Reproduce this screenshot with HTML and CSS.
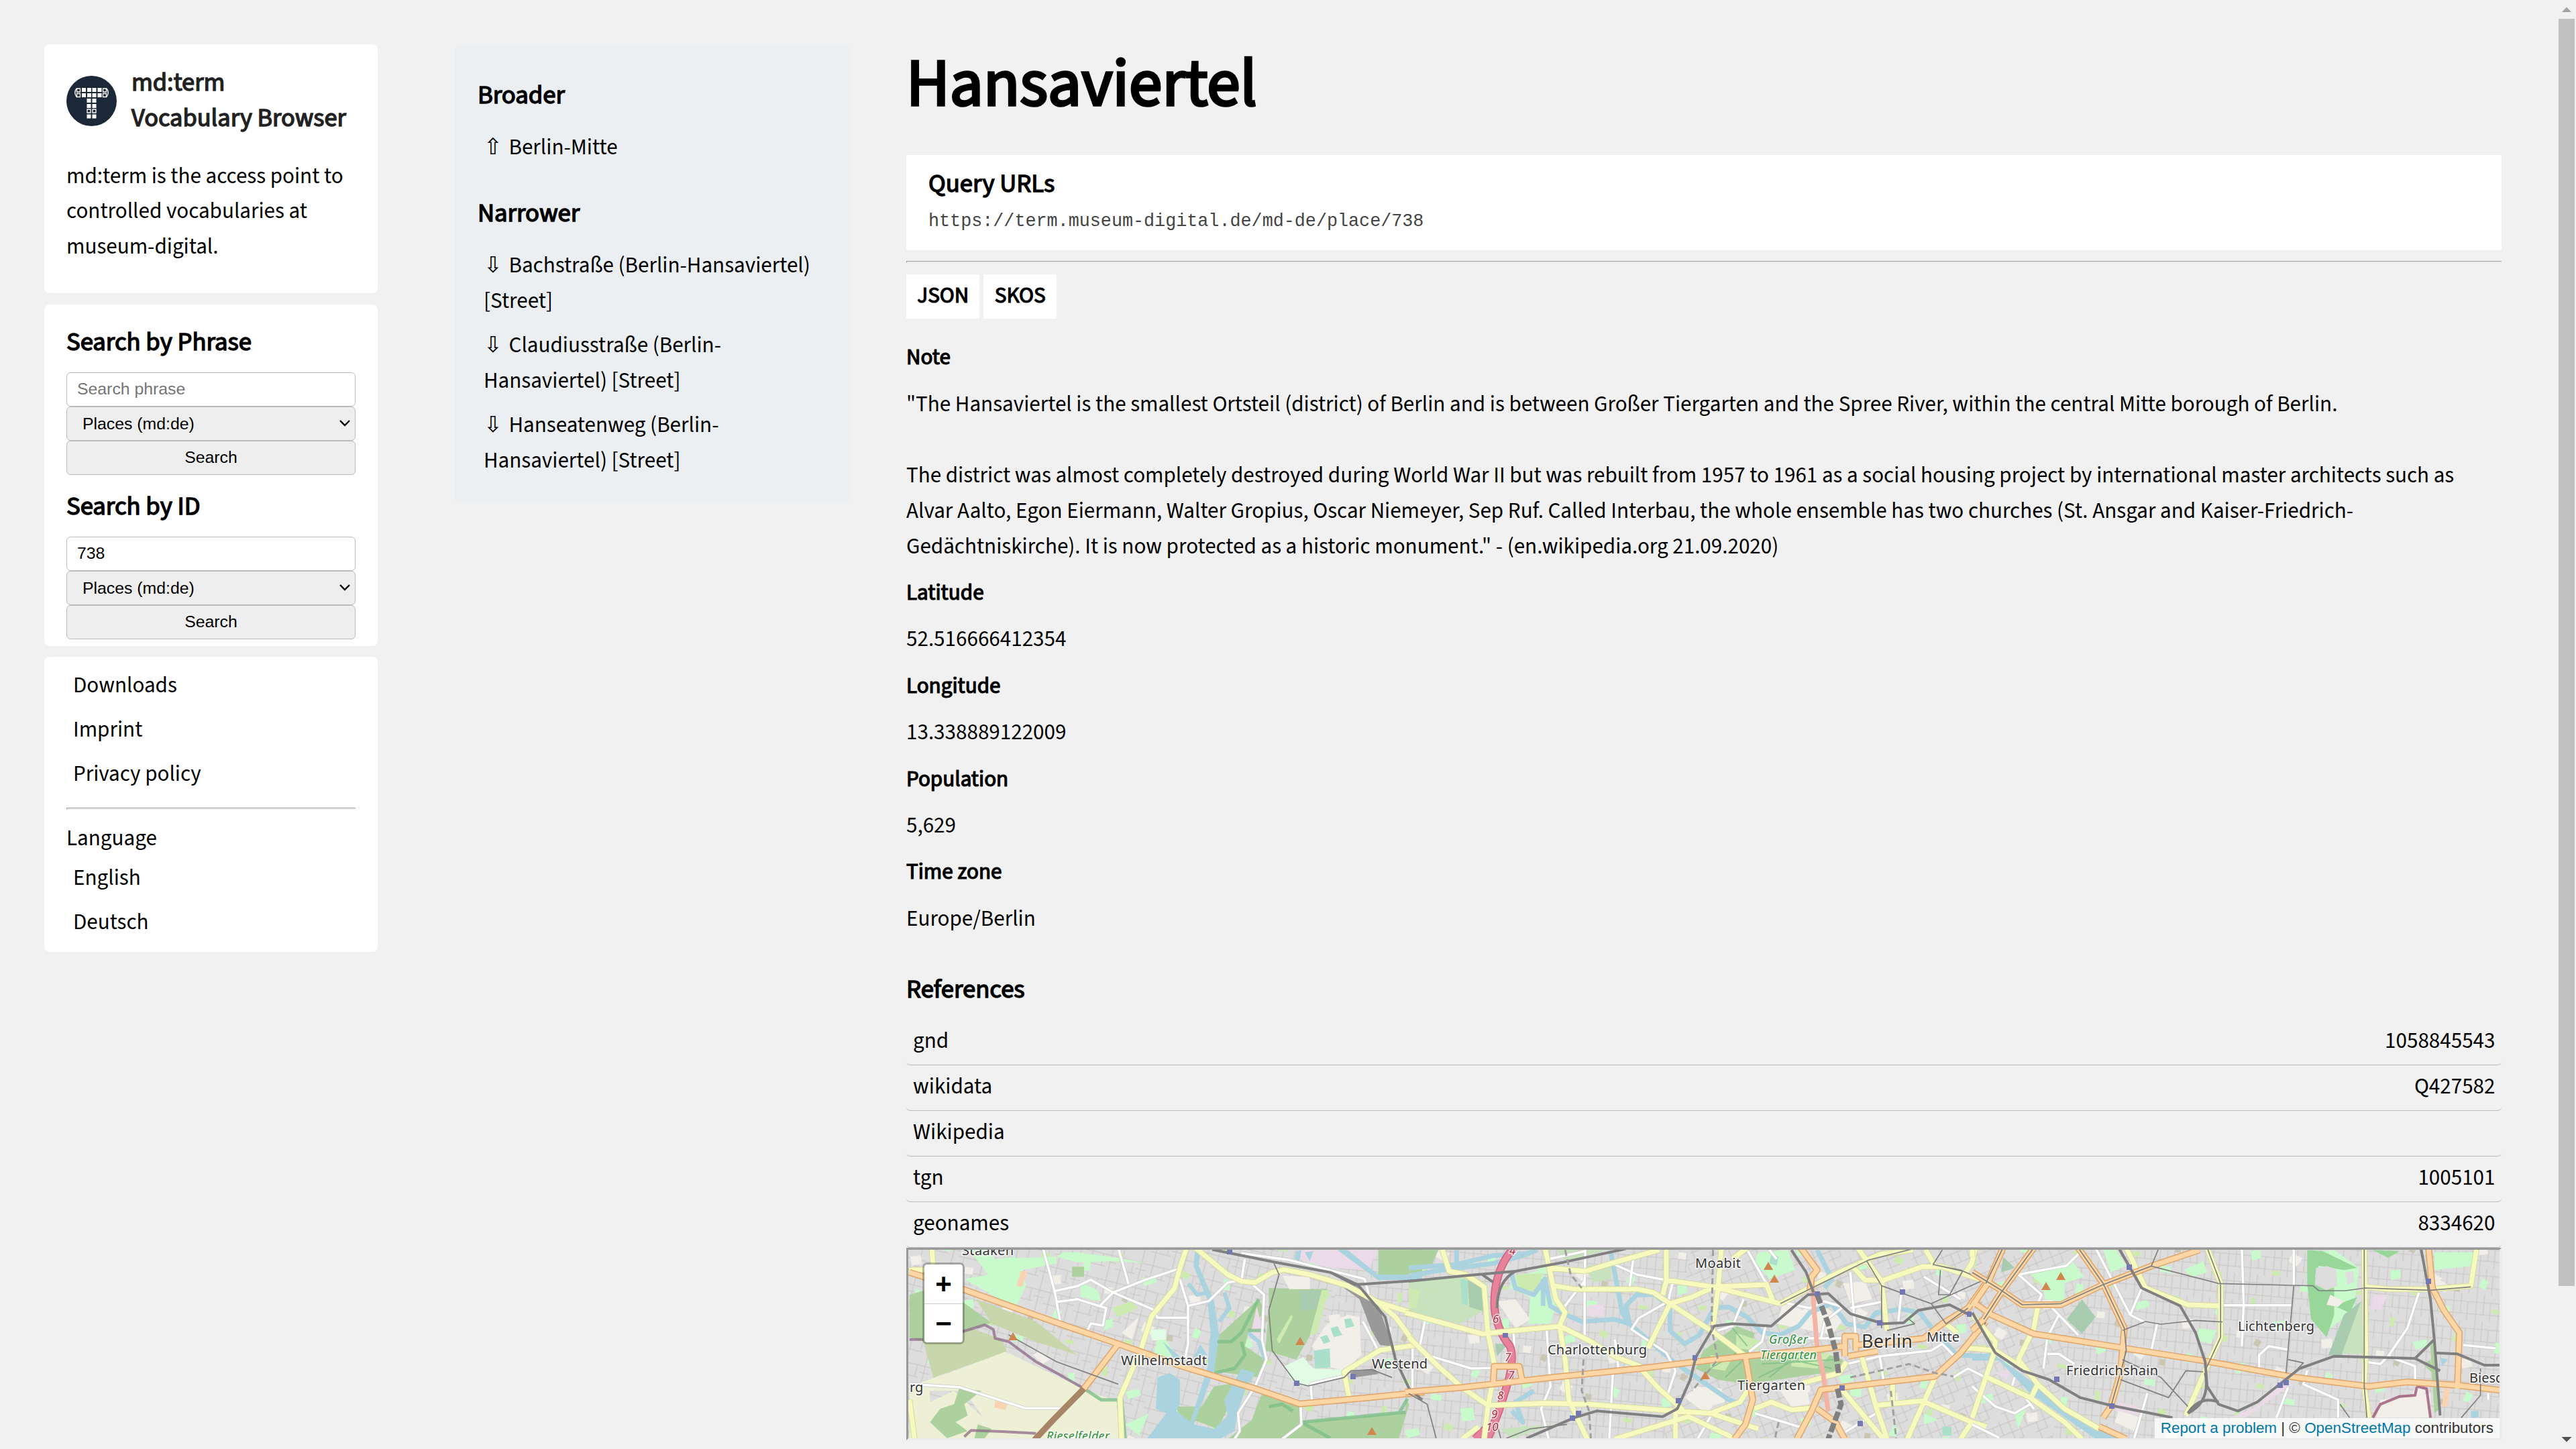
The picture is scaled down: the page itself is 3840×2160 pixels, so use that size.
FILE: index.html
```html
<!DOCTYPE html>
<html lang="en">
<head>
<meta charset="utf-8">
<title>Hansaviertel - md:term</title>
<link rel="stylesheet" href="styles.css">
</head>
<body>
<div class="page">
  <nav class="sidebar">
    <section class="card intro">
      <header class="brand">
        <svg class="logo" viewBox="0 0 75 75">
          <circle cx="37.500" cy="37.500" r="37.500" fill="#1c2838"/>
          <g fill="#fff">
            <path d="M23 18h6v6h-6zM31 18h6v6h-6zM38.500 18h6v6h-6zM46.500 18h6v6h-6zM23 26h6v6h-6zM31 26h6v6h-6zM38.500 26h6v6h-6zM46.500 26h6v6h-6zM30.500 34h6v6h-6zM38.500 34h6v6h-6zM30.500 42h6v6h-6zM38.500 42h6v6h-6zM30.500 57.500h6v6h-6zM38.500 57.500h6v6h-6z"/>
          </g>
          <path fill="none" stroke="#fff" stroke-width="1.300" d="M15.500 19h5v5h-5zM15.500 26.500h5v5h-5zM54.500 19h5v5h-5zM54.500 26.500h5v5h-5zM31 50h5v5h-5zM39 50h5v5h-5zM15 19q-4.500 6 0 12.500M60 19q4.500 6 0 12.500"/>
        </svg>
        <h3 class="brand-name">md:term<br>Vocabulary Browser</h3>
      </header>
      <p class="intro-text">md:term is the access point to controlled vocabularies at museum-digital.</p>
    </section>
    <section class="card search">
      <h3 class="heading">Search by Phrase</h3>
      <form class="form">
        <input class="field" type="text" placeholder="Search phrase">
        <select class="field select"><option>Places (md:de)</option></select>
        <button class="field button" type="button">Search</button>
      </form>
      <h3 class="heading second">Search by ID</h3>
      <form class="form">
        <input class="field" type="text" value="738">
        <select class="field select"><option>Places (md:de)</option></select>
        <button class="field button" type="button">Search</button>
      </form>
    </section>
    <section class="card links">
      <ul class="list"><li>Downloads</li><li>Imprint</li><li>Privacy policy</li></ul>
      <hr class="rule">
      <p class="language">Language</p>
      <ul class="list"><li>English</li><li>Deutsch</li></ul>
    </section>
  </nav>

  <aside class="relations">
    <h3 class="heading">Broader</h3>
    <ul class="terms"><li><span class="arrow">⇧</span>Berlin-Mitte</li></ul>
    <h3 class="heading narrower">Narrower</h3>
    <ul class="terms">
      <li><span class="arrow">⇩</span>Bachstraße (Berlin-Hansaviertel) [Street]</li>
      <li><span class="arrow">⇩</span>Claudiusstraße (Berlin-Hansaviertel) [Street]</li>
      <li><span class="arrow">⇩</span>Hanseatenweg (Berlin-Hansaviertel) [Street]</li>
    </ul>
  </aside>

  <main class="main">
    <h1 class="title">Hansaviertel</h1>
    <section class="query">
      <h3 class="heading">Query URLs</h3>
      <code class="url">https://term.museum-digital.de/md-de/place/738</code>
    </section>
    <hr class="rule">
    <div class="formats"><a class="format">JSON</a><a class="format">SKOS</a></div>
    <dl class="facts">
      <dt>Note</dt>
      <dd>"The Hansaviertel is the smallest Ortsteil (district) of Berlin and is between Großer Tiergarten and the Spree River, within the central Mitte borough of Berlin.<br><br>The district was almost completely destroyed during World War II but was rebuilt from 1957 to 1961 as a social housing project by international master architects such as Alvar Aalto, Egon Eiermann, Walter Gropius, Oscar Niemeyer, Sep Ruf. Called Interbau, the whole ensemble has two churches (St. Ansgar and Kaiser-Friedrich-Gedächtniskirche). It is now protected as a historic monument." - (en.wikipedia.org 21.09.2020)</dd>
      <dt>Latitude</dt><dd>52.516666412354</dd>
      <dt>Longitude</dt><dd>13.338889122009</dd>
      <dt>Population</dt><dd>5,629</dd>
      <dt>Time zone</dt><dd>Europe/Berlin</dd>
    </dl>
    <h3 class="heading references">References</h3>
    <ul class="refs">
      <li><span>gnd</span><span>1058845543</span></li>
      <li><span>wikidata</span><span>Q427582</span></li>
      <li><span>Wikipedia</span></li>
      <li><span>tgn</span><span>1005101</span></li>
      <li><span>geonames</span><span>8334620</span></li>
    </ul>
    <div class="map">
      <svg class="tiles" viewBox="1354 1863 2372 281" preserveAspectRatio="none">
        <defs>
          <pattern id="st1" width="46" height="38" patternUnits="userSpaceOnUse" patternTransform="rotate(14)"><path class="street" d="M0 9H46M0 27H30M8 0V38M25 9V27M37 0V38M30 19H46"/></pattern>
          <pattern id="st2" width="38" height="44" patternUnits="userSpaceOnUse" patternTransform="rotate(-22)"><path class="street" d="M0 7H38M0 23H38M0 36H20M6 0V44M19 7V36M30 0V23"/></pattern>
          <pattern id="st3" width="34" height="40" patternUnits="userSpaceOnUse" patternTransform="rotate(5)"><path class="street" d="M0 12H34M0 30H34M5 0V40M16 0V30M26 12V40"/></pattern>
          <pattern id="specks" width="210" height="170" patternUnits="userSpaceOnUse" patternTransform="rotate(8)"><path fill="#c8facc" d="M12 20l14-4 3 12-13 6zM92 60h16v9h-16zM150 12l10 4-4 12-10-2zM60 120l20-6 4 9-18 8zM182 104h10v16h-10z"/><path fill="#cdebb0" d="M48 44h12v7h-12zM120 100l12 4-4 9-12-4zM170 56h14v6h-14zM22 88h7v14h-7zM196 150h10v9h-10z"/><path fill="#f2efe9" d="M74 14l16 6-7 13-13-6zM134 136l16-4 3 13-15 4zM8 140h12v10h-12z"/><path fill="#c9c6b3" d="M110 28h9v9h-9zM38 148l9 3-4 9-8-3z"/></pattern>

          <g id="a-white"><path d="M460 60L495 260 510 388M680 60L710 222M490 255L560 232 600 203 665 260 780 335 795 373H884M665 260L625 322M500 302L560 290 645 330 635 408 600 398 590 430M665 260L760 203 855 155M860 200L884 320V490L876 550M884 320L945 298 1000 215 1040 205 1050 110M1075 228L1106 270 1100 470 1113 560 1080 680 1030 800 1035 880 1020 915M1040 85L1180 115 1400 200 1412 270M1213 765L1215 850 1160 915M1395 390L1440 520M1242 668L1246 750M1242 668L1335 635M1540 505V700M1568 440L1560 500M70 670L215 683 410 778 515 778"/></g>
          <g id="a-yellow"><path d="M135 60L140 150M70 160L120 158M880 60L860 150 845 240 778 365 745 520 685 730 690 915M905 60L1000 180 1040 210 1080 215 1130 170 1165 158 1240 180 1350 230 1440 305 1570 365M1440 305L1490 370 1550 495M1550 495L1445 518 1340 615 1355 735M70 740L85 915"/></g>
          <g id="a-orange"><path d="M70 170L225 245 500 395 680 490 870 592 1080 690 1210 758 1400 732 1575 705M680 490L645 560 580 690"/></g>
          <g id="b-white"><path d="M480 70L478 210 455 255 420 330M478 210V470M370 115L480 75M560 135L620 180 700 205M610 110L600 240M718 210L705 300 625 375 605 425M920 70L970 215M910 290L880 410 840 430M970 410L960 480 925 525M605 425L700 530 725 610 700 735M560 470L570 600M1020 305L1090 330 1130 300 1180 325 1130 390 1120 470M1050 465H1180M1200 170L1215 460M1200 330L1290 300M1340 240L1330 400M1190 580L1280 545 1420 520 1450 490 1480 540M1280 545L1290 650M45 380L30 500 60 545 170 600 225 598M10 560V690M375 430L385 680 360 780 380 915M555 615L545 915M285 440L290 590M980 70L1000 110M940 800L1080 870M820 815L785 915M1170 900L1270 800M1480 640L1520 600 1568 640M1400 190L1450 240 1500 290"/></g>
          <g id="b-yellow"><path d="M90 60L110 165 155 180 205 235 215 440 235 600 215 770 205 915M-10 350L200 445 415 410M370 60L400 290 425 350 410 410 425 560 435 740 485 915M380 150L480 165 560 125 680 70M395 230L450 245H620L665 260 710 310 830 440 915 545M700 60V210L690 270M700 205L830 235 970 225M710 310L770 280 830 235 1010 310M920 60L880 110M850 60L840 250 825 440M970 215L990 300M710 310L650 510M410 410L490 475 565 550 630 590M0 460L80 590 145 685 215 765 370 755 490 760 720 790 820 800 950 870M630 600L680 690 745 785M725 790V915M560 915L760 815 870 900 880 915M820 800L900 750 920 700M940 780L985 750 1040 785 1110 775M1070 665L1170 620 1190 570M1010 310L1150 185 1280 90 1370 70M1220 60L1285 210 1300 430M1210 150L1240 205 1290 205 1395 145H1450L1568 210M1405 70L1430 140M1540 60L1530 130 1510 180M1230 540L1270 770 1300 915M1175 690L1290 915M1270 765L1395 745 1530 840 1570 860M1315 670V760M1430 640L1355 915M1530 840L1500 915M1510 510H1568M1460 400L1490 440M145 915L190 860"/></g>
          <g id="b-orange"><path d="M-10 706L145 685 390 640 630 600 780 570 915 545 1110 515 1185 500M1185 500V455H1215V520M1215 495L1320 480 1400 465 1450 400 1520 330 1568 220M1195 545L1275 522M230 660L232 590H300L308 650M915 545L935 740 915 850 885 915M1568 390L1500 530 1430 635 1120 695 1095 790 1055 915M1110 780L1160 840 1185 915M1065 60L1110 160 1095 190 1090 250M1185 500V545"/></g>
          <g id="b-pink"><path d="M1095 180L1100 300 1110 510 1125 610 1140 790" stroke="#f4b3a4"/></g>
          <g id="b-motor"><path d="M285 60Q228 170 233 330 240 430 275 500 288 550 270 660L245 790 215 915M215 860L180 915"/></g>
          <g id="c-white"><path d="M280 260L245 320 120 360 180 450 170 490 205 505 275 630M225 540L195 640 185 780M195 715H225L265 760M320 240L410 540 450 575M440 420L410 540M700 240L705 495 700 680M835 240V410M650 497H830M480 580L465 700M745 780V720L770 680 820 695M1160 440L1130 600 1080 725 1150 770V860M1080 725L1060 760 1020 750M870 790L860 850 950 920V1000M820 865L790 1000M455 890L420 1095M0 860L60 950 110 980 150 940M0 1030L70 1090M1275 675L1360 690M1340 890V920M100 880L110 820M140 915L160 960"/></g>
          <g id="c-yellow"><path d="M0 240V280M400 240L450 420 560 495 640 500M610 240L645 400V640L605 790 555 990M1018 240L1022 700 1018 860 1030 1000M1310 240L1295 410 1190 425H1080L1025 415M170 505L160 600 120 740 170 850 240 960 330 1050M0 540L60 660 55 720 0 1000M0 690L60 700 130 775M40 820L150 910 240 1020 285 1095M0 350L60 410M170 850L150 920"/></g>
          <g id="c-orange"><path d="M80 240L40 400 0 500M160 240L75 440 30 560 0 610M0 350L75 430 130 495H230L340 405 465 322 590 250M275 240L340 400 395 600 385 800 360 950 340 1000M0 480L50 540 160 625 380 685 600 745 840 820 1030 860 1130 840 1260 855 1375 878M1185 240L1195 420 1225 520 1265 620 1260 870M330 1040L400 1095"/></g>
        </defs>

        <rect x="1354" y="1863" width="2372" height="281" fill="#dddddd"/>
        <path fill="url(#st1)" d="M1354 1863H2000L1960 2144H1354z"/>
        <path fill="url(#st3)" d="M2000 1863H2520L2480 2144H1960z"/>
        <path fill="url(#st2)" d="M2520 1863H3100L3060 2144H2480z"/>
        <path fill="url(#st3)" d="M3100 1863H3726V2144H3060z"/>
        <rect x="1354" y="1863" width="2372" height="281" fill="url(#specks)"/>

        <g class="west" transform="translate(1320 1840) scale(.5102 .33333)">
          <path fill="#c8facc" d="M240 60H290L320 110 500 100V130L400 160 410 230 380 330 230 200 300 180zM520 80H560L700 110 760 130 680 120 560 125 500 100zM800 430L850 540 780 560zM700 850L770 800 740 900zM570 215L620 250 630 300 570 280z"/>
          <path fill="#add19e" d="M70 270L160 230 310 395 230 430 210 500 110 480 70 460zM545 145H580V190H545zM1120 240L1290 245 1260 400 1200 560 1110 520 1120 330zM1440 70H1568V200L1440 205zM960 470L1090 290 1110 340 1060 440 1050 500 1110 560 1090 640 950 610zM960 680L1040 660 970 870 900 830zM850 770H930L900 850 860 830zM1100 710L1210 770 1215 840 1520 795V735L1530 760 1500 915H1000L1070 830z"/>
          <path fill="#c8d7ab" d="M110 480L250 420 340 470 355 525 140 640zM265 290L440 390 560 540 440 480 310 400z"/>
          <path fill="#eef0d5" d="M70 680L220 600 350 525 580 690 435 915H180L300 850 230 700 70 700zM580 700L680 745V915H450zM70 700H130V915H70zM200 700L300 840 260 915H130V750z"/>
          <path fill="#add19e" d="M215 690L280 700 230 760 240 810 205 840 240 880 180 912 130 840 160 780 200 760zM270 850L310 870 290 912H260z"/>
          <path fill="#ebdbe8" d="M1200 70H1440L1410 160 1300 150 1200 110zM1085 320L1100 420 1080 500 1065 460z"/>
          <path fill="#f2efe9" d="M1160 185L1240 190V245H1180zM1290 400L1350 360 1385 370 1390 540 1340 610 1290 590 1245 500zM450 520L480 560 460 580 430 540zM690 440L740 370 720 470z"/>
          <path fill="#e2fbe4" d="M1165 590L1220 550 1250 600 1335 605V630L1220 680 1180 640zM770 425H820V470L780 475z"/>
          <path fill="#aae0cb" d="M1252 520L1298 510 1300 595 1255 600zM1300 420L1320 410 1335 450 1310 460zM1340 380L1360 375 1370 410 1345 420zM1270 460L1290 450 1300 480 1280 490z"/>
          <path fill="#a9cbaf" d="M1210 250L1270 250 1265 335 1210 340z"/>
          <path fill="#cdebb0" d="M1275 250H1295L1260 445 1240 450zM1185 360L1190 370 1150 490 1143 470zM660 330L720 300 740 330 680 370z"/>
          <path fill="#f8d4b5" d="M395 165H415L400 235 383 230zM320 745L358 755 350 785 318 775z"/>
          <path fill="#aad3df" d="M795 640L830 620 860 650V760L850 790 900 850 960 870 1000 810 990 740 1040 600 1080 620 1050 700 1030 790 1020 880 980 912H765L820 800 790 780zM905 70H920L915 140 960 300 975 450 960 610 900 850 890 840 940 600 950 440 940 290 900 140zM810 480L870 560 840 550zM920 490L940 540 900 550zM1320 70H1350L1440 180H1568V205H1440zM1200 75L1215 70 1210 120 1195 110zM1225 80L1250 75 1240 120z"/>
          <path fill="none" stroke="#aad3df" stroke-width="6" d="M885 220L910 270 940 260M990 260L1005 330 975 390M1060 440L1090 480 1110 560"/>
          <path fill="none" stroke="#7fc08b" stroke-width="5" opacity=".8" d="M580 690L630 740 680 740 690 912M1090 290L1040 440 1010 480 970 480M1040 480L1050 540 1020 600 960 620M1060 430H1110M1215 840L1520 795M1215 840L1300 912M1120 770L1160 760 1190 790M1525 735L1500 800M690 740L700 912"/>
          <path fill="none" stroke="#8c6a87" stroke-width="4" d="M70 470H110M225 435L290 405 315 425 320 465 360 480 440 570 500 620 580 690M230 905L250 877 340 882 440 890" stroke-opacity=".75"/>
          <path fill="#999" d="M1335 235L1380 230 1440 320 1475 470V500L1445 495 1420 430 1385 290zM1355 615L1430 600 1440 625 1370 640z"/>
          <use href="#a-white" class="case minor"/><use href="#a-white" class="fill minor"/>
          <use href="#a-yellow" class="case yellow"/><use href="#a-yellow" class="fill yellow"/>
          <path d="M580 690L490 830 435 920" fill="none" stroke="#a98567" stroke-width="9"/>
          <use href="#a-orange" class="case orange"/><use href="#a-orange" class="fill orange"/>
          <path class="rail" d="M955 68L1140 125 1300 170 1380 225 1460 370 1490 560 1530 690 1568 740M1300 170L1370 225 1568 205"/>
          <path class="rail thin" d="M1135 130L1150 180 1120 340 1130 520 1200 665 1235 678 1340 640 1360 610 1420 605 1480 640M360 450L500 570 680 670"/>
        </g>

        <g class="centre" transform="translate(2100 1840) scale(.5485 .33333)">
          <path fill="#add19e" d="M0 70H80L60 150 0 160zM800 520L890 410 940 440 930 530 1110 520 1180 560 1170 610 920 670 840 650 780 600z"/>
          <path fill="#c8e2bd" d="M30 200L150 190 205 240 200 345 140 400 0 345V210zM480 140L550 130V200L500 215zM280 915L390 850 250 870zM400 70H540L430 120z"/>
          <path fill="#a9cbaf" d="M160 205L205 240V345L165 325zM235 490H270L240 545z"/>
          <path fill="#c8facc" d="M280 190L360 160 400 320 385 400H325L330 280 275 240zM950 80L1030 70 1050 160 980 200 940 120zM140 780L175 775 180 830 145 835zM1400 800L1440 830 1400 850zM1200 690H1230V730L1200 720z"/>
          <path fill="#cdebb0" d="M290 180L365 175 350 250 300 265zM890 440L960 480 950 520 890 510zM1040 540L1150 530 1110 600 1040 590zM820 540L880 550 860 610 820 600zM0 240L30 250 20 330H0z"/>
          <path fill="#aae0cb" d="M140 200L160 205V320L145 310zM985 90L1005 100 1000 140 980 130zM1450 860H1475V900H1450z"/>
          <path fill="#ebdbe8" d="M490 315H530V365H490z"/>
          <path fill="#f2efe9" d="M780 680L850 690 860 750 790 780 750 730zM1020 290L1070 340 1110 300 1180 380 1150 450 1000 400zM1010 700L1080 670 1090 760 1040 770zM1180 220L1240 210 1260 290 1200 310zM240 300L290 290 330 380 290 420z"/>
          <path fill="none" stroke="#7fc08b" stroke-width="2" opacity=".8" d="M820 600L900 520M860 640L910 560M950 640L1080 540M960 580L1160 560M980 640L1040 560 1150 600M880 420L920 500"/>
          <path fill="none" stroke="#aad3df" stroke-width="7" d="M0 185L70 165 230 130 300 100 350 70M0 150L130 135 230 95 330 85M280 180L290 240 340 270 370 200 385 320 420 355 470 390 560 380 600 400 590 320 620 270 670 270 710 330 710 430 750 490 790 450 830 330 870 325 920 370 960 440 1010 450 1060 410 1090 350 1150 310 1190 400 1240 415 1270 350 1340 335 1390 350 1430 440 1490 540 1568 545M548 70L580 350 600 400M600 400L720 570 870 740 905 760M1110 70L1150 200 1130 240M130 70V170M365 200V320M340 700L290 750 310 840 280 790"/>
          <use href="#b-white" class="case minor"/><use href="#b-white" class="fill minor"/>
          <use href="#b-motor" class="case motor"/><use href="#b-motor" class="fill motor"/>
          <use href="#b-yellow" class="case yellow"/><use href="#b-yellow" class="fill yellow"/>
          <use href="#b-pink" fill="none" stroke-width="7"/>
          <use href="#b-orange" class="case orange"/><use href="#b-orange" class="fill orange"/>
          <path class="rail" d="M0 210L150 185 290 165 420 125 590 65M240 330Q240 210 290 165M200 180L230 215M320 912L450 820 510 790 690 815 730 780 765 650 780 550 830 410 880 400 985 410 1085 270 1140 265 1200 355 1290 400 1345 395 1385 340 1470 315 1530 365 1568 400M1040 70L1080 170 1100 260"/>
          <path class="rail heavy" d="M1110 270L1140 400 1160 520 1168 620M1165 690L1175 760 1140 915"/>
          <path class="rail thin" d="M265 912L330 870 430 850M0 712L50 760 75 915M1245 120L1285 230V420M1285 230L1420 310 1568 200M1450 70L1425 135 1505 165 1470 270 1440 270 1445 160M1425 135L1500 160 1568 210M1010 310L1250 115 1370 65M1520 330L1460 400 1420 310M240 850L250 912M1300 430L1375 400 1360 380"/>
          <path class="rail tunnel" d="M827 70L823 420 840 560 770 700M425 70L440 180 470 240M475 560L470 700 490 790 495 915M1200 640L1280 610 1360 580 1430 620 1480 635M1310 700L1325 915M1005 840L995 915"/>
        </g>

        <g class="east" transform="translate(2940 1780) scale(.57398 .33333)">
          <path fill="#c8facc" d="M150 360L260 300 290 370 240 400 240 480 190 470 180 400zM340 250L370 240 400 320 360 350zM600 300L610 350 570 370 550 340zM590 600L635 610 620 670 580 650zM890 260L940 250 1005 330 990 520 930 600 890 550 870 400zM1200 260H1300V320L1200 340zM110 990L140 960 120 1050z"/>
          <path fill="#a9cbaf" d="M285 470L320 550 285 625 245 560zM1010 480L960 720H925L965 540zM80 280L110 330 75 350z"/>
          <path fill="#c8e2bd" d="M1010 480L1018 715H960z"/>
          <path fill="#98d69a" d="M870 250L910 255 1000 330 965 340 900 320 890 370 940 420 940 540 920 640 880 560 870 400zM1040 250L1110 255 1080 285zM940 500L1000 460 980 530z"/>
          <path fill="#dddddd" d="M893 330L920 322 945 335 948 410 920 430 890 405zM968 350L990 345 992 390 975 405z"/>
          <path fill="#ebdbe8" d="M1045 450H1080L1060 520 1035 510zM800 830L830 850 710 1000H670L740 950zM60 800L100 780 90 830zM380 930L450 960 430 990 370 970z"/>
          <path fill="#f2efe9" d="M380 970L440 1000 420 1060 370 1020zM1210 380L1240 410 1230 440 1200 420zM930 450L965 480 950 505 920 495zM1060 920L1190 890V1000H1050z"/>
          <path fill="#f8d4b5" d="M1225 870H1240L1235 950H1220z"/>
          <path fill="#add19e" d="M1190 680L1200 650 1215 960 1200 980zM1170 760L1190 740 1195 800z"/>
          <path fill="#aad3df" d="M0 720L50 710 180 870 280 1000 380 1095H320L150 890 70 745 0 745zM1215 730L1235 740 1220 770zM1295 970H1315V1000H1295z"/>
          <path fill="none" stroke="#9b5576" stroke-width="4" stroke-opacity=".8" d="M1040 1000L1060 940 1110 905 1150 900 1155 860 1180 870 1190 1000"/>
          <use href="#c-white" class="case minor"/><use href="#c-white" class="fill minor"/>
          <use href="#c-yellow" class="case yellow"/><use href="#c-yellow" class="fill yellow"/>
          <use href="#c-orange" class="case orange"/><use href="#c-orange" class="fill orange"/>
          <path class="rail" d="M380 240L440 420 540 500 580 620 605 750 610 860 640 940 690 970 740 930 850 780 940 725 1150 735 1200 650 1190 470 1165 240M0 530L60 710 130 790 200 830 280 910 360 945 520 1000M1200 650L1215 990M1150 735L1215 790M1200 710L1260 715 1330 765H1370M605 800Q620 930 560 980M560 980Q590 900 640 930"/>
          <path class="rail thin" d="M485 240L465 322 640 400 830 408 885 410 900 432H970L1020 420 1190 430 1295 415M275 240L340 400 395 600 400 700 385 800 360 950M160 240L75 440 30 560M80 240L35 400M0 350L75 430 130 495 230 490 340 405M340 405L465 322M835 410L815 800M645 400V640L605 790M1018 240V860L1025 1000M390 610L450 570 490 582 580 565 650 572M390 740L440 780 490 820 560 950M385 830L510 910 555 790 600 795M1320 780L1320 900 1270 1000M820 740L860 755 840 790M955 940L980 1000M610 240L645 400"/>
        </g>

        <g fill="#d0874f"><path d="M1510 1986l7 12h-14zM1938 1993l7 12h-14zM2045 2127l7 12h-14zM2636 1881l7 12h-14zM2645 1900l7 12h-14zM2542 2044l7 12h-14zM3072 1896l7 12h-14zM3050 1911l7 12h-14z"/></g>
        <g fill="#7378b0"><path d="M1829 1863h8v7h-8zM1929 2058h8v8h-8zM2013 2048h8v8h-8zM2240 1987h8v7h-8zM2523 2020h7v8h-7zM2498 2084h8v8h-8zM2349 2103h8v8h-8zM2340 2110h8v8h-8zM2705 1925h8v7h-8zM2832 1922h8v8h-8zM2798 1968h8v8h-8zM2742 2065h8v8h-8zM2769 2118h8v8h-8zM2932 1955h7v8h-7zM3170 1885h8v8h-8zM3616 1906h8v8h-8zM3062 2052h8v8h-8zM3144 2092h8v8h-8zM3395 2061h8v8h-8zM3404 2057h8v8h-8z"/></g>

        <g class="labels">
          <text x="1434" y="1871" textLength="77">Staaken</text>
          <text x="1356" y="2075">rg</text>
          <text x="1671" y="2035" textLength="128">Wilhelmstadt</text>
          <text x="2045" y="2040" textLength="83">Westend</text>
          <text x="2307" y="2019" textLength="148">Charlottenburg</text>
          <text x="2527" y="1890" textLength="68">Moabit</text>
          <text x="2590" y="2072" textLength="101">Tiergarten</text>
          <text class="city" x="2775" y="2009" textLength="76">Berlin</text>
          <text x="2872" y="2000" textLength="49">Mitte</text>
          <text x="3080" y="2050" textLength="137">Friedrichshain</text>
          <text x="3336" y="1984" textLength="114">Lichtenberg</text>
          <text x="3681" y="2061">Biesdorf</text>
          <g class="park"><text x="1560" y="2147" textLength="94">Rieselfelder</text><text x="2637" y="2003" textLength="58">Großer</text><text x="2624" y="2026" textLength="84">Tiergarten</text></g>
          <g class="exit"><text x="2250" y="1870">4</text><text x="2225" y="1972">6</text><text x="2243" y="2029">7</text><text x="2248" y="2056">7</text><text x="2232" y="2086">8</text><text x="2223" y="2114">9</text><text x="2215" y="2133">10</text></g>
        </g>
      </svg>
      <div class="zoom"><a>+</a><a>−</a></div>
      <div class="attribution"><a>Report a problem</a> | © <a>OpenStreetMap</a> contributors</div>
    </div>
  </main>

  <div class="scrollbar">
    <svg class="step" viewBox="0 0 30 28"><path d="M9 18l7-7.500 7 7.500z" fill="#a3a3a3"/></svg>
    <div class="thumb"></div>
    <svg class="step down" viewBox="0 0 30 28"><path d="M8.500 10h15l-7.500 7.500z" fill="#505050"/></svg>
  </div>
</div>
</body>
</html>
```
FILE: styles.css
```css
* { box-sizing: border-box; }
html { font-size: 33.100px; }
body {
  margin: 0;
  background: #f1f1f1;
  color: #000;
  font-family: "Source Sans Pro", "Source Sans 3", "Noto Sans CJK SC", sans-serif;
  font-size: 1rem;
  line-height: 52.9px;
}
h1, h3, p, ul, dl, dd { margin: 0; padding: 0; font-weight: 400; }
ul { list-style: none; }

.page { display: flex; align-items: flex-start; height: 2160px; padding-left: 66px; overflow: hidden; }

.sidebar { display: flex; flex-direction: column; gap: 16.5px; width: 497px; margin-top: 66px; }
.card { background: #fff; border-radius: 8px; padding: 0 33px; }
.intro { height: 371px; padding-top: 31px; }
.search { padding-top: 29px; padding-bottom: 10px; }
.links { padding-top: 16.500px; padding-bottom: 17.500px; }

.brand { display: flex; gap: 22px; align-items: flex-start; }
.logo { width: 75px; height: 75px; margin-top: 16px; }
.brand-name, .heading, .title, .format, dt { -webkit-text-stroke: .037em currentColor; }
.brand-name { font-size: 1.16rem; color: #222; line-height: 53px; white-space: nowrap; }
.intro-text { margin-top: 33.500px; }

.heading { font-size: 1.17rem; line-height: 53px; }
.second { margin-top: 20px; }
.form { display: flex; flex-direction: column; margin-top: 19px; }
.field {
  width: 100%;
  height: 51px;
  padding: 0 15px;
  border: 1px solid #bbb;
  border-radius: 6px;
  background: #fff;
  color: #000;
  font: 24.800px "Liberation Sans", Arial, sans-serif;
}
.field::placeholder { color: #757575; }
.select {
  appearance: none;
  padding-left: 23px;
  background: #eee url("data:image/svg+xml,%3Csvg xmlns='http://www.w3.org/2000/svg' width='18' height='12'%3E%3Cpath d='M2 2l7 7 7-7' fill='none' stroke='%23000' stroke-width='2.300'/%3E%3C/svg%3E") no-repeat right 6px center;
}
.button { background: #eee; }

.list { display: flex; flex-direction: column; gap: 13.200px; padding-left: 10px; }
.rule { height: 3px; margin: 0; border: 1px solid #e6e6e6; border-top-color: #9a9a9a; border-left-color: #9a9a9a; }
.links .rule { margin: 23.500px 0 16.500px; }
.language { margin-bottom: 6px; }

.relations {
  width: 590px;
  height: 683.500px;
  margin: 66px 0 0 115px;
  padding: 48.500px 32px 0 34px;
  border-radius: 10px;
  background: #ebeff2;
}
.terms { display: flex; flex-direction: column; gap: 13.200px; margin-top: 26px; padding-left: 9px; }
.arrow { display: inline-block; width: 37.500px; font-family: "DejaVu Sans", sans-serif; line-height: 1; }
.narrower { margin-top: 45px; }

.main { width: 2378px; margin: 75.700px 0 0 83px; }
.title { font-size: 3.005rem; line-height: 100px; }
.query { height: 142px; margin-top: 55.300px; padding: 15.700px 33px 0; background: #fff; }
.url {
  display: block;
  margin-top: 4.200px;
  color: #444;
  font-family: "Courier New", "Nimbus Mono PS", FreeMono, "Liberation Mono", monospace;
  font-size: 26.750px;
}
.main > .rule { margin: 16px 0 17px; }
.formats { display: flex; gap: 6px; }
.format { height: 66px; padding: 6.500px 16.300px 0; background: #fff; }
.facts { display: flex; flex-direction: column; gap: 16.500px; margin-top: 32.500px; }
.references { margin-top: 51.300px; }
.refs { margin-top: 19px; }
.refs li {
  display: flex;
  justify-content: space-between;
  height: 68px;
  padding: 6.500px 9.500px 0 10px;
  border-bottom: 1px solid #bbb;
  border-radius: 6px;
}

.map { position: relative; height: 287px; border: 3px solid #ececec; border-top-color: #999; border-left-color: #999; }
.tiles { display: block; width: 2372px; height: 281px; }
.tiles path { vector-effect: non-scaling-stroke; stroke-linejoin: round; }
.street { fill: none; stroke: #c6c4c1; stroke-width: 1; }
.case, .fill { fill: none; }
.case.minor { stroke: #c9c9c9; stroke-width: 5px; }
.fill.minor { stroke: #fff; stroke-width: 3.500px; }
.case.yellow { stroke: #d6d9a4; stroke-width: 9px; }
.fill.yellow { stroke: #f7fabf; stroke-width: 7px; }
.case.orange { stroke: #e0a468; stroke-width: 10px; }
.fill.orange { stroke: #fcd6a4; stroke-width: 7px; }
.case.motor { stroke: #d0607c; stroke-width: 12px; }
.fill.motor { stroke: #e6829a; stroke-width: 9px; }
.rail { fill: none; stroke: #808080; stroke-width: 4px; }
.rail.heavy { stroke-width: 8px; stroke-dasharray: 14 4; }
.rail.thin { stroke: #808080; stroke-width: 1.700px; }
.rail.tunnel { stroke: #a0a0a0; stroke-width: 3px; stroke-dasharray: 9 5; }
.labels { fill: #333; font: 20px "Noto Sans", sans-serif; paint-order: stroke; stroke: #fff; stroke-opacity: .75; stroke-width: 3px; }
.city { font-size: 27px; }
.park { fill: #2f8f3d; font-size: 18px; font-style: italic; }
.exit { fill: #a8303f; font-size: 17px; font-style: italic; }

.zoom {
  position: absolute;
  top: 19px;
  left: 21px;
  width: 63px;
  border: 3px solid rgba(0, 0, 0, .25);
  border-radius: 7px;
  background: #fff;
  background-clip: padding-box;
}
.zoom a { display: block; height: 58px; font: bold 42px/57px "Liberation Sans", sans-serif; text-align: center; }
.zoom a + a { border-top: 1px solid #ccc; }
.attribution {
  position: absolute;
  right: 0;
  bottom: 0;
  height: 30px;
  padding: 0 9px;
  background: rgba(255, 255, 255, .8);
  color: #333;
  font: 22.450px/30px "Liberation Sans", sans-serif;
}
.attribution a { color: #0078a8; }

.scrollbar { display: flex; flex-direction: column; width: 30px; height: 2160px; margin-left: auto; background: #f1f1f1; }
.step { width: 30px; height: 28px; }
.down { margin-top: auto; }
.thumb { width: 24px; height: 1889px; margin-left: 4px; background: #c1c1c1; }
```
